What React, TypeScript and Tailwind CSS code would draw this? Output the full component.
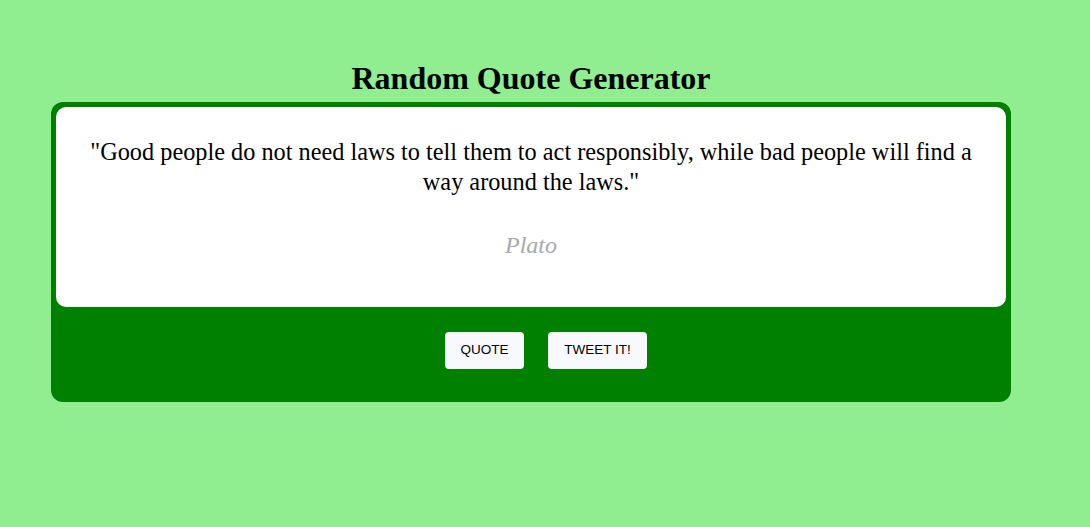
import React from "react";

const App: React.FC = () => {
  return (
    <div className="min-h-[527px] w-full bg-[#90ee90] pt-[60px]">
      <div className="ml-[51px] w-[960px]">
        {/* Title */}
        <h1 className="text-center font-['Liberation_Serif',serif] text-[32px] font-bold leading-[37px] text-black mb-[5px]">
          Random Quote Generator
        </h1>

        {/* Quote card */}
        <div className="rounded-[12px] bg-[#008000] p-[5px] pb-0 h-[300px] flex flex-col">
          <div className="h-[200px] rounded-[10px] bg-white px-[30px] pt-[30px] text-center font-['Liberation_Serif',serif]">
            <p className="text-[24.3px] leading-[30px] text-black">
              "Good people do not need laws to tell them to act responsibly, while bad people will find a way around the laws."
            </p>
            <p className="mt-[33px] text-[24px] leading-[30px] italic text-[#a9a9a9]">
              Plato
            </p>
          </div>

          {/* Actions */}
          <div className="flex justify-center gap-[24px] pt-[25px] pl-[30px]">
            <button className="h-[37px] w-[79px] rounded-[4px] bg-[#f8f8ff] font-['Liberation_Sans',sans-serif] text-[13.5px] text-black">
              QUOTE
            </button>
            <button className="h-[37px] w-[99px] rounded-[4px] bg-[#f8f8ff] font-['Liberation_Sans',sans-serif] text-[13.5px] text-black">
              TWEET IT!
            </button>
          </div>
        </div>
      </div>
    </div>
  );
};

export default App;
